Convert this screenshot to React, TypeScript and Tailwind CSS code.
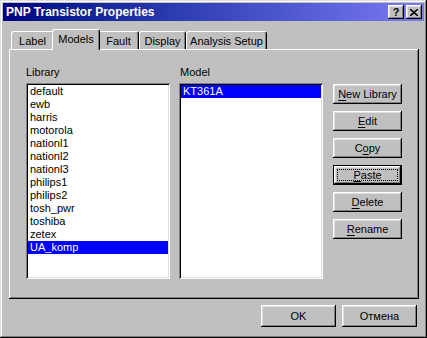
const raised =
  "shadow-[inset_-1px_-1px_#000,inset_1px_1px_#fff,inset_-2px_-2px_#808080,inset_2px_2px_#dfdfdf]";
const sunken =
  "shadow-[inset_1px_1px_#808080,inset_-1px_-1px_#fff,inset_2px_2px_#000,inset_-2px_-2px_#dfdfdf]";

const libraries = [
  "default",
  "ewb",
  "harris",
  "motorola",
  "nationl1",
  "nationl2",
  "nationl3",
  "philips1",
  "philips2",
  "tosh_pwr",
  "toshiba",
  "zetex",
  "UA_komp",
];

const tabs = [
  { label: "Label", w: "w-[43px]" },
  { label: "Models", w: "w-[48px]", active: true },
  { label: "Fault", w: "w-[41px]" },
  { label: "Display", w: "w-[47px]" },
  { label: "Analysis Setup", w: "w-[81px]" },
];

function Mn({ pre = "", u, post }: { pre?: string; u: string; post: string }) {
  return (
    <span>
      {pre}
      <span className="underline underline-offset-2">{u}</span>
      {post}
    </span>
  );
}

function Btn({ children, def }: { children: React.ReactNode; def?: boolean }) {
  if (def) {
    return (
      <div className="w-[69px] h-[20px] border border-black">
        <div className={`w-full h-full flex items-center justify-center p-[3px] ${raised}`}>
          <div className="w-full h-full flex items-center justify-center border border-dotted border-black">
            {children}
          </div>
        </div>
      </div>
    );
  }
  return (
    <div className={`w-[69px] h-[20px] flex items-center justify-center ${raised}`}>{children}</div>
  );
}

function TitleBtn({ children }: { children: React.ReactNode }) {
  return (
    <div
      className={`w-[16px] h-[14px] bg-[#c0c0c0] flex items-center justify-center text-black font-bold text-[11px] leading-none ${raised}`}
    >
      {children}
    </div>
  );
}

export default function App() {
  return (
    <div
      className="w-[427px] h-[338px] bg-[#c0c0c0] text-black text-[11px] leading-[13px] select-none"
      style={{ fontFamily: '"Liberation Sans", Arial, sans-serif' }}
    >
      <div
        className={`w-[427px] h-[338px] p-[3px] flex flex-col shadow-[inset_-1px_-1px_#000,inset_1px_1px_#dfdfdf,inset_-2px_-2px_#808080,inset_2px_2px_#fff]`}
      >
        {/* title bar */}
        <div className="h-[18px] shrink-0 bg-gradient-to-r from-[#000080] to-[#7b7bf5] flex items-center justify-between pl-[3px] pr-[2px]">
          <span className="text-white font-bold text-[12px]">PNP Transistor Properties</span>
          <div className="flex gap-[2px]">
            <TitleBtn>?</TitleBtn>
            <TitleBtn>
              <svg width="8" height="7" viewBox="0 0 8 7">
                <path d="M0 0 L8 7 M8 0 L0 7" stroke="#000" strokeWidth="1.6" />
              </svg>
            </TitleBtn>
          </div>
        </div>

        <div className="flex-1 px-[6px] pt-[8px] flex flex-col">
          {/* tabs */}
          <div className="h-[20px] flex items-end pl-[2px]">
            {tabs.map((t) => (
              <div
                key={t.label}
                className={
                  t.active
                    ? `${t.w} -mx-[2px] h-[21px] -mb-[1px] relative z-10 bg-[#c0c0c0] border-l border-t border-white border-r border-r-black rounded-t-[3px] shadow-[inset_-1px_0_#808080] flex items-start justify-center pt-[3px]`
                    : `${t.w} h-[18px] bg-[#c0c0c0] border-l border-t border-white border-r border-r-black rounded-t-[3px] shadow-[inset_-1px_0_#808080] flex items-start justify-center pt-[3px]`
                }
              >
                {t.label}
              </div>
            ))}
          </div>

          {/* panel */}
          <div
            className={`w-[410px] h-[250px] shrink-0 pl-[17px] pt-[17px] flex shadow-[inset_-1px_-1px_#000,inset_1px_1px_#fff,inset_-2px_-2px_#808080]`}
          >
            <div className="w-[144px] flex flex-col">
              <div className="h-[13px]">Library</div>
              <div className={`mt-[4px] h-[196px] bg-white p-[2px] ${sunken}`}>
                {libraries.map((l) => (
                  <div
                    key={l}
                    className={`h-[13px] pl-[2px] ${l === "UA_komp" ? "bg-[#0000ff] text-white" : ""}`}
                  >
                    {l}
                  </div>
                ))}
              </div>
            </div>

            <div className="w-[144px] ml-[9px] flex flex-col">
              <div className="h-[13px] pl-[1px]">Model</div>
              <div className={`mt-[4px] h-[196px] bg-white p-[2px] ${sunken}`}>
                <div className="h-[13px] pl-[2px] bg-[#0000ff] text-white">KT361A</div>
              </div>
            </div>

            <div className="ml-[10px] pt-[18px] flex flex-col gap-[7px]">
              <Btn>
                <Mn u="N" post="ew Library" />
              </Btn>
              <Btn>
                <Mn u="E" post="dit" />
              </Btn>
              <Btn>
                <Mn pre="C" u="o" post="py" />
              </Btn>
              <Btn def>
                <Mn u="P" post="aste" />
              </Btn>
              <Btn>
                <Mn u="D" post="elete" />
              </Btn>
              <Btn>
                <Mn u="R" post="ename" />
              </Btn>
            </div>
          </div>

          {/* footer */}
          <div className="flex justify-end gap-[6px] pt-[6px] pr-[1px]">
            <div className={`w-[75px] h-[22px] flex items-center justify-center ${raised}`}>OK</div>
            <div className={`w-[75px] h-[22px] flex items-center justify-center ${raised}`}>Отмена</div>
          </div>
        </div>
      </div>
    </div>
  );
}
